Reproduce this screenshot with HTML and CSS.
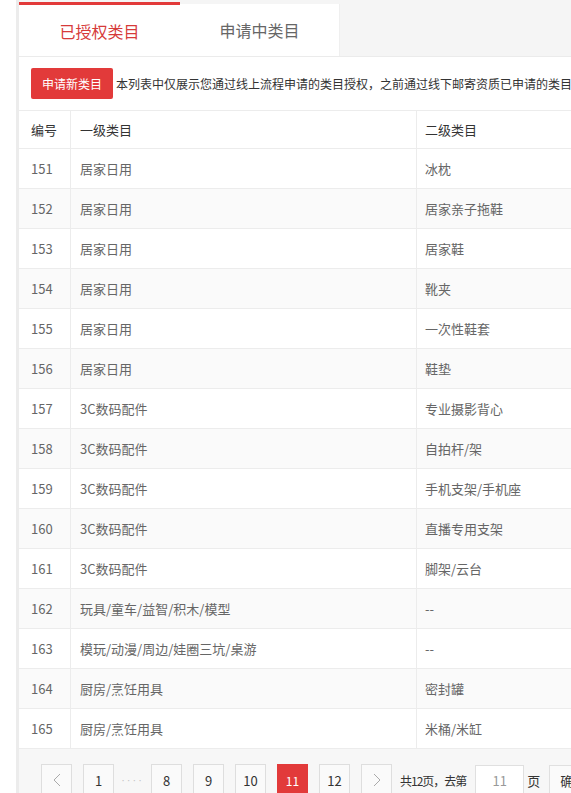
FILE: index.html
```
<!DOCTYPE html>
<html lang="zh-CN">
<head>
<meta charset="utf-8">
<title>类目管理</title>
<link rel="stylesheet" href="styles.css">
</head>
<body>
<div class="page">
  <div class="tabs">
    <div class="tab tab-active">已授权类目</div>
    <div class="tab">申请中类目</div>
  </div>
  <div class="panel">
    <div class="toolbar">
      <button class="btn-apply">申请新类目</button>
      <span class="notice">本列表中仅展示您通过线上流程申请的类目授权，之前通过线下邮寄资质已申请的类目授权不在此列表中展示</span>
    </div>
    <table class="grid">
      <thead>
        <tr><th class="c1">编号</th><th class="c2">一级类目</th><th class="c3">二级类目</th></tr>
      </thead>
      <tbody>
        <tr><td class="c1">151</td><td class="c2">居家日用</td><td class="c3">冰枕</td></tr>
        <tr><td class="c1">152</td><td class="c2">居家日用</td><td class="c3">居家亲子拖鞋</td></tr>
        <tr><td class="c1">153</td><td class="c2">居家日用</td><td class="c3">居家鞋</td></tr>
        <tr><td class="c1">154</td><td class="c2">居家日用</td><td class="c3">靴夹</td></tr>
        <tr><td class="c1">155</td><td class="c2">居家日用</td><td class="c3">一次性鞋套</td></tr>
        <tr><td class="c1">156</td><td class="c2">居家日用</td><td class="c3">鞋垫</td></tr>
        <tr><td class="c1">157</td><td class="c2">3C数码配件</td><td class="c3">专业摄影背心</td></tr>
        <tr><td class="c1">158</td><td class="c2">3C数码配件</td><td class="c3">自拍杆/架</td></tr>
        <tr><td class="c1">159</td><td class="c2">3C数码配件</td><td class="c3">手机支架/手机座</td></tr>
        <tr><td class="c1">160</td><td class="c2">3C数码配件</td><td class="c3">直播专用支架</td></tr>
        <tr><td class="c1">161</td><td class="c2">3C数码配件</td><td class="c3">脚架/云台</td></tr>
        <tr><td class="c1">162</td><td class="c2">玩具/童车/益智/积木/模型</td><td class="c3">--</td></tr>
        <tr><td class="c1">163</td><td class="c2">模玩/动漫/周边/娃圈三坑/桌游</td><td class="c3">--</td></tr>
        <tr><td class="c1">164</td><td class="c2">厨房/烹饪用具</td><td class="c3">密封罐</td></tr>
        <tr><td class="c1">165</td><td class="c2">厨房/烹饪用具</td><td class="c3">米桶/米缸</td></tr>
      </tbody>
    </table>
    <div class="pager">
      <div class="pages">
        <span class="pg pg-arrow"><svg width="8" height="14" viewBox="0 0 8 14"><polyline points="7,1 1,7 7,13" fill="none" stroke="#aaa" stroke-width="1"/></svg></span>
        <span class="pg">1</span>
        <span class="ellipsis">····</span>
        <span class="pg">8</span>
        <span class="pg">9</span>
        <span class="pg">10</span>
        <span class="pg pg-current">11</span>
        <span class="pg">12</span>
        <span class="pg pg-arrow"><svg width="8" height="14" viewBox="0 0 8 14"><polyline points="1,1 7,7 1,13" fill="none" stroke="#aaa" stroke-width="1"/></svg></span>
      </div>
      <span class="total">共12页，去第</span>
      <input class="jump" type="text" value="11">
      <span class="unit">页</span>
      <button class="btn-go">确定</button>
    </div>
  </div>
</div>
</body>
</html>
```
FILE: styles.css
```
html, body {
  margin: 0;
  padding: 0;
}
body {
  width: 571px;
  height: 793px;
  overflow: hidden;
  background: #fff;
  font-family: "Noto Sans CJK SC", "Microsoft YaHei", sans-serif;
  color: #333;
}
.page {
  margin-left: 16px;
  border-left: 3px solid #ececec;
  width: 760px;
  min-height: 793px;
  background: #fff;
}
.tabs {
  display: flex;
  align-items: flex-start;
  height: 57px;
  box-sizing: border-box;
  background: #f5f5f5;
  border-bottom: 1px solid #ebebeb;
}
.tab {
  width: 160px;
  height: 52px;
  margin-top: 4px;
  box-sizing: border-box;
  background: #fff;
  border-right: 1px solid #efefef;
  display: flex;
  align-items: center;
  justify-content: center;
  font-size: 16px;
  color: #666;
}
.tab-active {
  width: 161px;
  height: 54px;
  margin-top: 2px;
  border-top: 3px solid #e23a3a;
  border-right: none;
  color: #d63a3a;
}
.panel {
  background: #fff;
}
.toolbar {
  display: flex;
  align-items: center;
  padding: 11px 12px;
  white-space: nowrap;
}
.btn-apply {
  height: 31px;
  width: 82px;
  padding: 0;
  border: none;
  border-radius: 2px;
  background: #e23a3a;
  color: #fff;
  font-family: inherit;
  font-size: 12px;
}
.notice {
  margin-left: 3px;
  font-size: 12px;
  color: #333;
}
.grid {
  width: 740px;
  table-layout: fixed;
  border-collapse: separate;
  border-spacing: 0;
  border-top: 1px solid #ececec;
  font-size: 13px;
}
.grid th, .grid td {
  padding: 0;
  text-align: left;
  font-weight: normal;
  border-bottom: 1px solid #ececec;
  white-space: nowrap;
  box-sizing: border-box;
}
.grid th {
  height: 38px;
  color: #333;
}
.grid td {
  height: 40px;
  color: #666;
}
.grid tbody tr:nth-child(even) td {
  background: #fafafa;
}
.grid .c1 {
  width: 52px;
  padding-left: 12px;
  border-right: 1px solid #ececec;
}
.grid .c2 {
  width: 346px;
  padding-left: 9px;
  border-right: 1px solid #ececec;
}
.grid .c3 {
  padding-left: 8px;
}
.pager {
  display: flex;
  align-items: center;
  background: #f7f7f7;
  padding: 15px 0 20px 22px;
  white-space: nowrap;
}
.pages {
  display: flex;
  align-items: center;
  gap: 11px;
}
.pg {
  width: 31px;
  height: 32px;
  box-sizing: border-box;
  border: 1px solid #dedede;
  background: #fafafa;
  display: flex;
  align-items: center;
  justify-content: center;
  font-size: 13px;
  color: #333;
}
.pg-current {
  background: #e23a3a;
  border-color: #e23a3a;
  color: #fff;
  font-size: 12px;
}
.ellipsis {
  width: 15px;
  display: flex;
  justify-content: center;
  font-family: "Liberation Sans", sans-serif;
  font-size: 11px;
  color: #c4c4c4;
  letter-spacing: 2px;
}
.total {
  margin-left: 8px;
  font-size: 12px;
  letter-spacing: -1px;
  color: #333;
}
.jump {
  margin-left: 9px;
  width: 49px;
  height: 30px;
  box-sizing: border-box;
  border: 1px solid #e0e0e0;
  background: #fff;
  text-align: center;
  font-family: inherit;
  font-size: 13px;
  color: #999;
  padding: 0;
}
.unit {
  margin-left: 3px;
  font-size: 13px;
  color: #333;
}
.btn-go {
  margin-left: 9px;
  height: 30px;
  padding: 0 10px;
  border: 1px solid #e0e0e0;
  background: #fafafa;
  font-family: inherit;
  font-size: 13px;
  color: #333;
}
```
